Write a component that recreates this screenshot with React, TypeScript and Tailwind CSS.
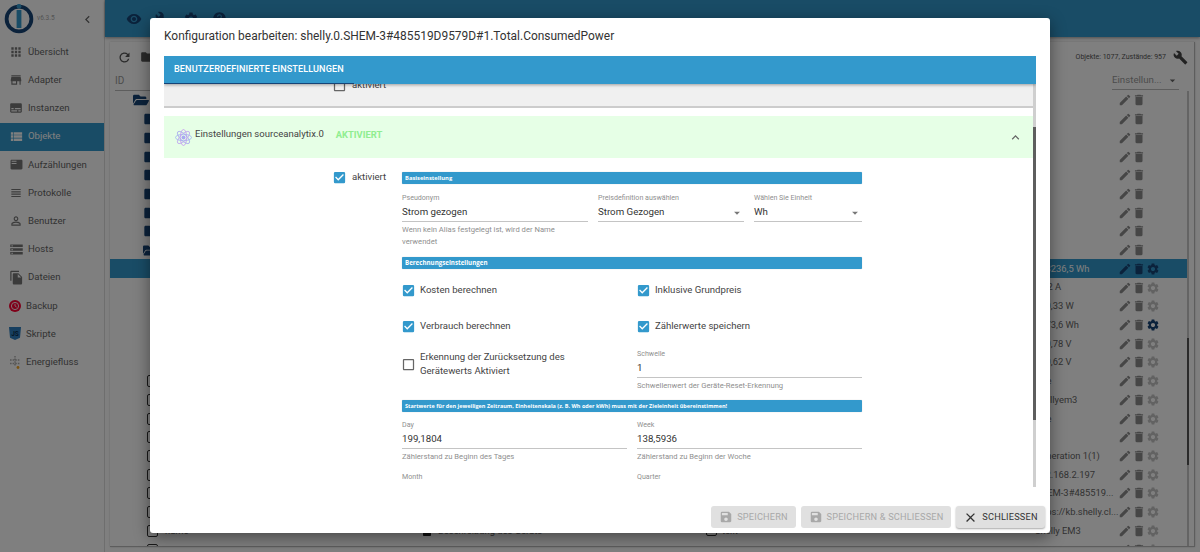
import React from "react";
import { MdApps, MdStore, MdSubtitles, MdViewList, MdViewHeadline, MdPersonOutline, MdStorage, MdFileCopy, MdRefresh, MdBuild, MdVisibility, MdSettings, MdHelp, MdEdit, MdDelete, MdArrowDropDown, MdKeyboardArrowUp, MdChevronLeft, MdCheckBox, MdCheckBoxOutlineBlank, MdSave, MdClose, MdFolder, MdFeaturedPlayList, MdInsertDriveFile } from "react-icons/md";
import { FaFolderOpen } from "react-icons/fa";

const Logo = () => (
  <svg width="30" height="30" viewBox="0 0 30 30" className="shrink-0">
    <circle cx="15" cy="15" r="12.4" fill="none" stroke="#164477" strokeWidth="3.8" />
    <rect x="12.6" y="0" width="4.8" height="4.4" rx="2.2" fill="#3399cc" />
    <rect x="12.6" y="6" width="4.8" height="18" fill="#3399cc" />
  </svg>
);
const BackupIcon = () => (
  <svg width="12" height="12" viewBox="0 0 12 12"><circle cx="6" cy="6" r="6" fill="#ff0033" /><circle cx="6" cy="6" r="3.6" fill="none" stroke="#fff" strokeWidth="0.9" /><path d="M6 3.8V6l1.6 1" stroke="#fff" strokeWidth="0.8" fill="none" /></svg>
);
const ShieldIcon = () => (
  <svg width="12" height="13" viewBox="0 0 12 13"><path d="M0 0h12l-1 10.8L6 13l-5-2.2z" fill="#2f7fc0" /><text x="6" y="8.8" textAnchor="middle" fontSize="6.5" fontWeight="700" fill="#0b2d4d" fontFamily="Roboto, sans-serif">JS</text></svg>
);
const FlowIcon = () => (
  <svg width="12" height="13" viewBox="0 0 12 13"><path d="M6 0v10M1 4h10M1 7.5h10" stroke="#aaa" strokeWidth="1.4" strokeDasharray="1.6 1" fill="none" /><circle cx="9" cy="11.5" r="1.4" fill="#f5a623" /></svg>
);
const AtomIcon = () => (
  <svg width="17" height="17" viewBox="0 0 17 17">
    <ellipse cx="8.5" cy="8.5" rx="8" ry="3.2" fill="none" stroke="#9db4f0" strokeWidth="0.8" />
    <ellipse cx="8.5" cy="8.5" rx="3.2" ry="8" fill="none" stroke="#c596f0" strokeWidth="0.8" />
    <ellipse cx="8.5" cy="8.5" rx="8" ry="3.2" fill="none" stroke="#a5a5f0" strokeWidth="0.8" transform="rotate(45 8.5 8.5)" />
    <ellipse cx="8.5" cy="8.5" rx="8" ry="3.2" fill="none" stroke="#bda2f0" strokeWidth="0.8" transform="rotate(-45 8.5 8.5)" />
    <circle cx="8.5" cy="8.5" r="2" fill="#a9a9f0" />
  </svg>
);

const nav: { label: string; icon: React.ReactNode; tight?: boolean; active?: boolean }[] = [
  { label: "Übersicht", icon: <MdApps size={14} /> },
  { label: "Adapter", icon: <MdStore size={14} /> },
  { label: "Instanzen", icon: <MdSubtitles size={14} /> },
  { label: "Objekte", icon: <MdViewList size={15} />, active: true },
  { label: "Aufzählungen", icon: <MdFeaturedPlayList size={13} /> },
  { label: "Protokolle", icon: <MdViewHeadline size={14} /> },
  { label: "Benutzer", icon: <MdPersonOutline size={14} /> },
  { label: "Hosts", icon: <MdStorage size={15} /> },
  { label: "Dateien", icon: <MdFileCopy size={15} /> },
  { label: "Backup", icon: <BackupIcon />, tight: true },
  { label: "Skripte", icon: <ShieldIcon />, tight: true },
  { label: "Energiefluss", icon: <FlowIcon />, tight: true },
];

type Row = { kind: "open" | "closed" | "outline" | "blank" | "doc"; value?: string; gear?: "on" | "off"; selected?: boolean; name?: string; desc?: string; role?: string };
const rows: Row[] = [
  { kind: "open" },
  { kind: "closed" }, { kind: "closed" }, { kind: "closed" }, { kind: "closed" }, { kind: "closed" }, { kind: "closed" }, { kind: "closed" },
  { kind: "outline" },
  { kind: "blank", value: "123236,5 Wh", gear: "on", selected: true },
  { kind: "blank", value: "0,12 A", gear: "off" },
  { kind: "blank", value: "230,33 W", gear: "off" },
  { kind: "blank", value: "1273,6 Wh", gear: "on" },
  { kind: "blank", value: "230,78 V", gear: "off" },
  { kind: "blank", value: "230,62 V", gear: "off" },
  { kind: "doc", value: "true", gear: "off" },
  { kind: "doc", value: "shellyem3", gear: "off" },
  { kind: "doc", value: "true", gear: "off" },
  { kind: "doc", gear: "off" },
  { kind: "doc", value: "Generation 1(1)", gear: "off" },
  { kind: "doc", value: "192.168.2.197", gear: "off" },
  { kind: "doc", value: "SHEM-3#485519...", gear: "off" },
  { kind: "doc", value: "https://kb.shelly.cl...", gear: "off" },
  { kind: "doc", value: "Shelly EM3", gear: "off", name: "name", desc: "Beschreibung des Geräts", role: "text" },
  { kind: "doc", gear: "off" },
];

function RowIcon({ kind }: { kind: Row["kind"] }) {
  if (kind === "open") return <FaFolderOpen size={16} className="ml-[-10px] text-[#164477]" />;
  if (kind === "closed") return <MdFolder size={16} className="text-[#164477]" />;
  if (kind === "outline") return <FaFolderOpen size={15} className="text-[#164477]" />;
  if (kind === "doc") return <span className="ml-[4px] block h-[12px] w-[11px] rounded-[2px] border border-[#333]" />;
  return null;
}

function Section({ children, className }: { children: React.ReactNode; className: string }) {
  return <div className={"flex h-[12px] items-center rounded-[1px] bg-[#3399cc] pl-[3px] font-['Open_Sans',sans-serif] font-bold text-white shadow-[0_0_1px_rgba(0,0,0,0.3)] " + className}>{children}</div>;
}
function Field({ label, value, help, select, className }: { label: string; value: string; help?: React.ReactNode; select?: boolean; className?: string }) {
  return (
    <div className={className}>
      <div className="h-[12px] text-[7.1px] leading-[12px] text-[#8f8f8f]">{label}</div>
      <div className="mt-[2px] flex h-[16px] items-center justify-between border-b border-[#c4c4c4] pb-[2px] text-[9.7px] text-[#333]">
        <span>{value}</span>
        {select && <MdArrowDropDown size={14} className="text-[#777]" />}
      </div>
      {help && <div className="mt-[2px] text-[7.65px] leading-[12px] text-[#8f8f8f]">{help}</div>}
    </div>
  );
}
function Check({ on, label, className }: { on: boolean; label: React.ReactNode; className?: string }) {
  return (
    <div className={"flex items-center text-[9.6px] text-[#444] " + (className ?? "")}>
      {on ? <MdCheckBox size={15} className="shrink-0 text-[#3399cc]" /> : <MdCheckBoxOutlineBlank size={15} className="shrink-0 text-[#666]" />}
      <span>{label}</span>
    </div>
  );
}
function FootBtn({ label, icon, off, className }: { label: string; icon: React.ReactNode; off?: boolean; className: string }) {
  return (
    <div className={"flex h-[22px] items-center justify-center gap-[4px] rounded-[3px] bg-[#e0e0e0] text-[9.2px] tracking-[0.2px] " + (off ? "text-[#a8a8a8] " : "text-[#333] shadow-[0_1px_2px_rgba(0,0,0,0.35)] ") + className}>
      {icon}
      <span>{label}</span>
    </div>
  );
}

export default function App() {
  return (
    <div className="relative flex h-[552px] w-[1200px] overflow-hidden bg-white font-['Roboto',sans-serif]">
      <aside className="flex w-[105px] shrink-0 flex-col border-r border-[#ddd]">
        <div className="flex h-[38px] items-center pl-[4px]">
          <Logo />
          <span className="ml-[3px] text-[6.5px] text-[#aaa]">v6.3.5</span>
          <MdChevronLeft size={15} className="ml-[25px] text-[#666]" />
        </div>
        {nav.map((n) => (
          <div key={n.label} className={"flex h-[28.2px] items-center text-[9.6px] " + (n.active ? "bg-[#3399cc] text-white" : "text-[#666]")}>
            <span className={"flex items-center justify-center " + (n.tight ? "w-[26px] pl-[4px]" : "w-[28px] pl-[4px]") + (n.active ? " text-white" : " text-[#777]")}>{n.icon}</span>
            <span>{n.label}</span>
          </div>
        ))}
      </aside>

      <main className="flex min-w-0 flex-1 flex-col">
        <header className="flex h-[37px] shrink-0 items-center gap-[13px] bg-[#3399cc] pl-[21px] text-[#164477] shadow-[0_1px_3px_rgba(0,0,0,0.4)]">
          <MdVisibility size={16} />
          <MdBuild size={15} />
          <MdSettings size={16} />
          <MdHelp size={15} />
        </header>
        <section className="mb-[5px] ml-[5px] mr-[5px] mt-[5px] flex min-h-0 flex-1 flex-col border-b border-r border-[#bbb] shadow-[0_0_2px_rgba(0,0,0,0.2)]">
          <div className="flex h-[30px] shrink-0 items-center pl-[7px] pr-[6px]">
            <MdRefresh size={15} className="text-[#555]" />
            <MdFolder size={14} className="ml-[8px] text-[#555]" />
            <span className="ml-auto text-[7px] text-[#555]">Objekte: 1077, Zustände: 957</span>
            <MdBuild size={15} className="ml-[7px] text-[#444]" />
          </div>
          <div className="mx-[5px] flex h-[19px] shrink-0 items-start justify-between">
            <span className="w-[400px] border-b border-[#bbb] text-[10px] leading-[18px] text-[#999]">ID</span>
            <div className="mr-[10px] flex h-[18px] w-[67px] items-center justify-between border-b border-[#bbb] text-[9.7px] text-[#999]">
              <span>Einstellun...</span>
              <MdArrowDropDown size={13} className="text-[#666]" />
            </div>
          </div>
          <div className="relative min-h-0 flex-1 overflow-hidden pr-[7px]">
            <div className="absolute right-[5px] top-0 h-full w-[2px] bg-[#c8c8c8]">
              <div className="mt-[247px] h-[127px] w-full bg-[#555]" />
            </div>
            {rows.map((r, i) => (
              <div key={i} className={"grid h-[18.72px] grid-cols-[33px_278px_285px_329px_83px_1fr] items-center text-[9.4px] " + (r.selected ? "bg-[#3399cc] text-white" : "text-[#666]")}>
                <span />
                <span className="flex items-center gap-[5px]"><RowIcon kind={r.kind} />{r.name && <span className="ml-[2px]">{r.name}</span>}</span>
                <span className="flex items-center gap-[5px]">{r.desc && <><MdInsertDriveFile size={12} className="text-[#222]" /><span>{r.desc}</span></>}</span>
                <span className="flex items-center gap-[5px]">{r.role && <><span className="block h-[11px] w-[11px] rounded-[2px] border border-[#333]" /><span>{r.role}</span></>}</span>
                <span className="overflow-visible whitespace-nowrap">{r.value}</span>
                <span className={"flex items-center " + (r.selected ? "text-[#164477]" : "text-[#8c8c8c]")}>
                  <MdEdit size={14} />
                  <MdDelete size={14} />
                  {r.gear && <MdSettings size={14} className={r.gear === "on" ? "text-[#164477]" : "text-[#c4c4c4]"} />}
                </span>
              </div>
            ))}
          </div>
        </section>
      </main>

      <div className="absolute inset-0 bg-black/50" />

      <div className="absolute left-[150px] top-[18px] flex h-[515px] w-[900px] flex-col overflow-hidden rounded-[3px] bg-white shadow-[0_4px_16px_rgba(0,0,0,0.45)]">
        <div className="flex h-[38px] shrink-0 items-center pl-[14px] text-[11.95px] text-[#333]">Konfiguration bearbeiten: shelly.0.SHEM-3#485519D9579D#1.Total.ConsumedPower</div>
        <div className="relative mx-[14px] h-[431px] shrink-0 overflow-hidden">
          <div className="relative z-10 flex h-[28px] items-center bg-[#3399cc] pl-[10px] text-[9.1px] font-medium uppercase tracking-[0.1px] text-white shadow-[0_1px_3px_rgba(0,0,0,0.35)]">
            Benutzerdefinierte Einstellungen
            <span className="absolute bottom-0 left-0 h-[1px] w-[190px] bg-[#164477]" />
          </div>
          <div className="absolute bottom-0 right-0 top-[28px] w-[3px] bg-[#cfcfcf]">
            <div className="mt-[43px] h-[293px] w-full bg-[#5e5e5e]" />
          </div>
          <div className="mr-[3px]">
            <div className="h-[24px] overflow-visible border-b-2 border-[#ccc] bg-[#f0f0f0] pl-[168px]">
              <Check on={false} label={<span className="ml-[5px]">aktiviert</span>} className="-translate-y-[6px]" />
            </div>
            <div className="mt-[8px] flex h-[42px] items-center bg-[#e6ffe6] pl-[11px] pr-[10px]">
              <AtomIcon />
              <span className="mb-[5px] ml-[3px] text-[9.55px] text-[#444]">Einstellungen sourceanalytix.0</span>
              <span className="mb-[4px] ml-[12px] text-[9.4px] font-bold text-[#90ee90]">AKTIVIERT</span>
              <MdKeyboardArrowUp size={15} className="ml-auto text-[#666]" />
            </div>
            <div className="mt-[14px] flex items-start pl-[168px]">
              <Check on={true} label={<span className="ml-[5px]">aktiviert</span>} className="w-[70px] shrink-0 -translate-y-[2px]" />
              <div className="w-[460px]">
                <Section className="text-[5.8px]">Basiseinstellung</Section>
                <div className="mt-[8px] grid grid-cols-[186px_146px_108px] gap-x-[10px]">
                  <Field label="Pseudonym" value="Strom gezogen" help={<>Wenn kein Alias festgelegt ist, wird der Name<br />verwendet</>} />
                  <Field label="Preisdefinition auswählen" value="Strom Gezogen" select />
                  <Field label="Wählen Sie Einheit" value="Wh" select />
                </div>
                <div className="mt-[9px]"><Section className="text-[6.2px]">Berechnungseinstellungen</Section></div>
                <div className="grid grid-cols-[225px_225px] gap-x-[10px]">
                  <div className="flex h-[32px] items-end pb-[3px] -ml-[1px]"><Check on={true} label={<span className="ml-[4px]">Kosten berechnen</span>} /></div>
                  <div className="flex h-[32px] items-end pb-[3px] -ml-[1px]"><Check on={true} label={<span className="ml-[4px]">Inklusive Grundpreis</span>} /></div>
                  <div className="flex h-[36px] items-end pb-[3px] -ml-[1px]"><Check on={true} label={<span className="ml-[4px]">Verbrauch berechnen</span>} /></div>
                  <div className="flex h-[36px] items-end pb-[3px] -ml-[1px]"><Check on={true} label={<span className="ml-[4px]">Zählerwerte speichern</span>} /></div>
                  <div className="-ml-[1px] mt-[13px]"><Check on={false} label={<span className="ml-[4px] block leading-[14px]">Erkennung der Zurücksetzung des<br />Gerätewerts Aktiviert</span>} /></div>
                  <Field label="Schwelle" value="1" help="Schwellenwert der Geräte-Reset-Erkennung" className="mt-[11px]" />
                </div>
                <div className="mt-[8px]"><Section className="text-[5.5px]">Startwerte für den jeweiligen Zeitraum, Einheitenskala (z. B. Wh oder kWh) muss mit der Zieleinheit übereinstimmen!</Section></div>
                <div className="mt-[7px] grid grid-cols-[225px_225px] gap-x-[10px]">
                  <Field label="Day" value="199,1804" help="Zählerstand zu Beginn des Tages" />
                  <Field label="Week" value="138,5936" help="Zählerstand zu Beginn der Woche" />
                </div>
                <div className="mt-[8px] grid grid-cols-[225px_225px] gap-x-[10px] text-[7.1px] leading-[12px] text-[#8f8f8f]">
                  <span>Month</span>
                  <span>Quarter</span>
                </div>
              </div>
            </div>
          </div>
        </div>
        <div className="flex flex-1 items-start justify-end gap-[5px] pr-[5px] pt-[19px]">
          <FootBtn off label="SPEICHERN" icon={<MdSave size={14} />} className="w-[85px]" />
          <FootBtn off label="SPEICHERN & SCHLIESSEN" icon={<MdSave size={14} />} className="w-[150px]" />
          <FootBtn label="SCHLIESSEN" icon={<MdClose size={15} />} className="w-[89px]" />
        </div>
      </div>
    </div>
  );
}
